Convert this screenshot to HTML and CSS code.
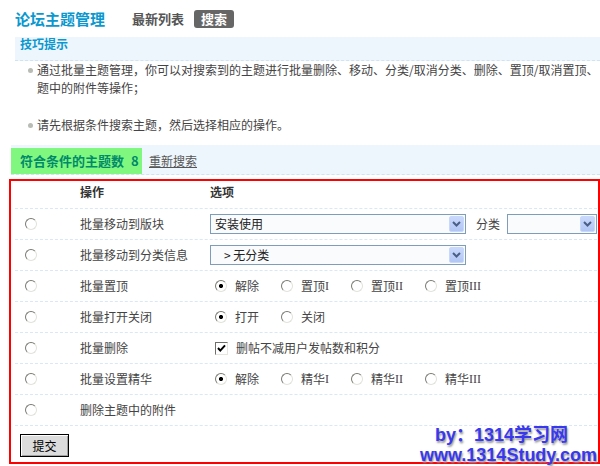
FILE: index.html
```html
<!DOCTYPE html>
<html lang="zh-CN">
<head>
<meta charset="utf-8">
<title>论坛主题管理</title>
<link rel="stylesheet" href="styles.css">
</head>
<body>
<div class="page">
  <div class="header">
    <span class="title">论坛主题管理</span>
    <a class="nav-link">最新列表</a>
    <span class="badge">搜索</span>
  </div>

  <div class="tips-bar">技巧提示</div>
  <ul class="tips-list">
    <li>通过批量主题管理，你可以对搜索到的主题进行批量删除、移动、分类/取消分类、删除、置顶/取消置顶、<br>题中的附件等操作；</li>
    <li class="second">请先根据条件搜索主题，然后选择相应的操作。</li>
  </ul>

  <div class="result-bar">
    <span class="result-count">符合条件的主题数<span class="num">8</span></span>
    <a class="research">重新搜索</a>
  </div>

  <div class="panel">
    <div class="row head">
      <div class="c-radio"></div>
      <div class="c-op">操作</div>
      <div class="c-opt">选项</div>
    </div>

    <div class="row">
      <div class="c-radio"><input type="radio" name="act"></div>
      <div class="c-op">批量移动到版块</div>
      <div class="c-opt">
        <div class="select wide"><span class="sel-text">安装使用</span><span class="sel-btn"><svg width="9" height="6" viewBox="0 0 9 6"><path d="M1 1 L4.5 4.5 L8 1" fill="none" stroke="#4b5f86" stroke-width="2"/></svg></span></div>
        <span class="sel-label">分类</span>
        <div class="select narrow"><span class="sel-text"></span><span class="sel-btn"><svg width="9" height="6" viewBox="0 0 9 6"><path d="M1 1 L4.5 4.5 L8 1" fill="none" stroke="#4b5f86" stroke-width="2"/></svg></span></div>
      </div>
    </div>

    <div class="row">
      <div class="c-radio"><input type="radio" name="act"></div>
      <div class="c-op">批量移动到分类信息</div>
      <div class="c-opt">
        <div class="select wide"><span class="sel-text indent">&gt; 无分类</span><span class="sel-btn"><svg width="9" height="6" viewBox="0 0 9 6"><path d="M1 1 L4.5 4.5 L8 1" fill="none" stroke="#4b5f86" stroke-width="2"/></svg></span></div>
      </div>
    </div>

    <div class="row">
      <div class="c-radio"><input type="radio" name="act"></div>
      <div class="c-op">批量置顶</div>
      <div class="c-opt pad">
        <label class="opt"><input type="radio" name="top" checked>解除</label>
        <label class="opt"><input type="radio" name="top">置顶<sub>I</sub></label>
        <label class="opt"><input type="radio" name="top">置顶<sub>II</sub></label>
        <label class="opt"><input type="radio" name="top">置顶<sub>III</sub></label>
      </div>
    </div>

    <div class="row">
      <div class="c-radio"><input type="radio" name="act"></div>
      <div class="c-op">批量打开关闭</div>
      <div class="c-opt pad">
        <label class="opt"><input type="radio" name="close" checked>打开</label>
        <label class="opt"><input type="radio" name="close">关闭</label>
      </div>
    </div>

    <div class="row">
      <div class="c-radio"><input type="radio" name="act"></div>
      <div class="c-op">批量删除</div>
      <div class="c-opt pad">
        <label class="opt"><span class="checkbox"><svg width="11" height="11" viewBox="0 0 11 11"><path d="M2 5 L4.3 7.6 L9 2.4" fill="none" stroke="#000" stroke-width="2"/></svg></span>删帖不减用户发帖数和积分</label>
      </div>
    </div>

    <div class="row">
      <div class="c-radio"><input type="radio" name="act"></div>
      <div class="c-op">批量设置精华</div>
      <div class="c-opt pad">
        <label class="opt"><input type="radio" name="digest" checked>解除</label>
        <label class="opt"><input type="radio" name="digest">精华<sub>I</sub></label>
        <label class="opt"><input type="radio" name="digest">精华<sub>II</sub></label>
        <label class="opt"><input type="radio" name="digest">精华<sub>III</sub></label>
      </div>
    </div>

    <div class="row">
      <div class="c-radio"><input type="radio" name="act"></div>
      <div class="c-op">删除主题中的附件</div>
      <div class="c-opt"></div>
    </div>

    <div class="footer">
      <button class="submit" type="button">提交</button>
    </div>
  </div>

  <div class="watermark">
    <div class="wm-line1">by：1314学习网</div>
    <div class="wm-line2">www.1314Study.com</div>
  </div>
</div>
</body>
</html>
```

FILE: styles.css
```css
html, body {
  margin: 0;
  padding: 0;
  background: #fff;
}

body {
  width: 600px;
  height: 466px;
  overflow: hidden;
  font-family: "Noto Sans CJK SC", "DejaVu Sans", sans-serif;
  font-size: 12px;
  color: #444;
}

.page {
  position: relative;
  width: 600px;
  height: 466px;
}

/* header */
.header {
  display: flex;
  align-items: center;
  height: 37px;
  padding-left: 15px;
}

.title {
  font-size: 15px;
  font-weight: bold;
  color: #0a98cf;
  margin-right: 27px;
  line-height: 18px;
}

.nav-link {
  font-size: 13px;
  font-weight: bold;
  color: #555;
  margin-right: 10px;
  line-height: 18px;
}

.badge {
  display: inline-block;
  background: #666;
  color: #fff;
  font-size: 13px;
  font-weight: bold;
  height: 18px;
  line-height: 18px;
  padding: 0 7px;
  border-radius: 3px;
}

/* tips */
.tips-bar {
  margin-left: 15px;
  height: 24px;
  box-sizing: border-box;
  background: #eef6fd;
  border-bottom: 1px dashed #cfe3f3;
  padding-left: 5px;
  font-weight: bold;
  color: #0a98cf;
  line-height: 13px;
}

.tips-list {
  list-style: none;
  margin: 0;
  padding: 0 0 0 27px;
}

.tips-list li {
  position: relative;
  padding-left: 10px;
  line-height: 18px;
  white-space: nowrap;
}

.tips-list li::before {
  content: "";
  position: absolute;
  left: 1px;
  top: 7px;
  width: 5px;
  height: 5px;
  border-radius: 50%;
  background: #b8bcb4;
}

.tips-list li.second {
  margin-top: 19px;
}

/* result bar */
.result-bar {
  display: flex;
  align-items: stretch;
  margin: 11px 0 0 11px;
  height: 30px;
  box-sizing: border-box;
  padding-top: 3px;
  background: #eef6fd;
  border-bottom: 1px dashed #cfe3f3;
}

.result-count {
  width: 131px;
  box-sizing: border-box;
  padding-left: 9px;
  background: #80f880;
  color: #008a6a;
  font-size: 13px;
  font-weight: bold;
  line-height: 25px;
  white-space: nowrap;
}

.result-count .num {
  margin-left: 7px;
}

.research {
  margin-left: 7px;
  color: #555;
  text-decoration: underline;
  line-height: 25px;
}

/* panel */
.panel {
  margin: 4px 0 0 9px;
  width: 591px;
  height: 285px;
  box-sizing: border-box;
  border: 2px solid #ff0000;
  padding: 0 1px 0 4px;
}

.row {
  display: grid;
  grid-template-columns: 65px 130px 1fr;
  align-items: center;
  height: 31px;
  box-sizing: border-box;
  border-bottom: 1px dashed #d8e8f6;
}

.row.head {
  height: 28px;
  align-items: start;
  font-weight: bold;
  color: #333;
}

.row.head > div {
  line-height: 22px;
}

.c-radio {
  padding-left: 10px;
  display: flex;
  align-items: center;
}

.c-op {
  line-height: 16px;
  white-space: nowrap;
}

.c-opt {
  display: flex;
  align-items: center;
  line-height: 16px;
  white-space: nowrap;
}

.c-opt.pad {
  padding-left: 5px;
}

input[type="radio"] {
  -webkit-appearance: none;
  appearance: none;
  width: 12px;
  height: 12px;
  margin: 0;
  border-radius: 50%;
  border: 1px solid;
  border-color: #7a7a72 #e2e2da #e2e2da #7a7a72;
  background: #fff;
  box-sizing: border-box;
  flex: none;
}

input[type="radio"]:checked {
  background: radial-gradient(circle at 50% 50%, #000 0, #000 1.7px, #fff 2.4px);
}

.opt {
  display: inline-flex;
  align-items: center;
  margin-right: 22px;
  white-space: nowrap;
}

.opt input,
.opt .checkbox {
  margin-right: 8px;
}

.opt sub {
  font-family: "Liberation Serif", serif;
  font-size: 12px;
  vertical-align: -3px;
  line-height: 0;
}

.checkbox {
  display: inline-flex;
  align-items: center;
  justify-content: center;
  width: 13px;
  height: 13px;
  box-sizing: border-box;
  border: 1px solid;
  border-color: #6f6f68 #e6e6de #e6e6de #6f6f68;
  background: #fff;
}

/* selects */
.select {
  display: flex;
  align-items: center;
  height: 20px;
  box-sizing: border-box;
  border: 1px solid #7f9db9;
  background: #fafbfd;
  flex: none;
}

.select.wide {
  width: 256px;
}

.select.narrow {
  width: 90px;
  margin-left: 7px;
}

.sel-text {
  flex: 1;
  padding-left: 4px;
  color: #222;
  line-height: 18px;
  white-space: nowrap;
}

.sel-text.indent {
  padding-left: 13px;
}

.sel-btn {
  width: 15px;
  height: 16px;
  margin-right: 1px;
  box-sizing: border-box;
  border: 1px solid #c8d8fb;
  border-radius: 2px;
  background: linear-gradient(#c9d8fc, #b2c6f4);
  display: flex;
  align-items: center;
  justify-content: center;
}

.sel-label {
  flex: none;
  margin-left: 10px;
  color: #444;
  white-space: nowrap;
}

/* footer */
.footer {
  padding: 8px 0 0 5px;
}

.submit {
  width: 49px;
  height: 23px;
  margin: 0;
  padding: 0;
  border: 1px solid #000;
  background: #dcdcdc;
  box-shadow: inset 1px 1px 0 #fff, inset -1px -1px 0 #a0a0a0;
  font-family: "Noto Sans CJK SC", sans-serif;
  font-size: 12px;
  color: #000;
}

/* watermark */
.watermark {
  position: absolute;
  left: 420px;
  top: 425px;
  font-family: "Liberation Sans", "Noto Sans CJK SC", sans-serif;
  font-size: 18px;
  font-weight: bold;
  color: #3838ee;
  line-height: 20px;
  text-shadow: 1px 2px 2px #999;
  white-space: nowrap;
}

.wm-line1 {
  padding-left: 15px;
}
```
